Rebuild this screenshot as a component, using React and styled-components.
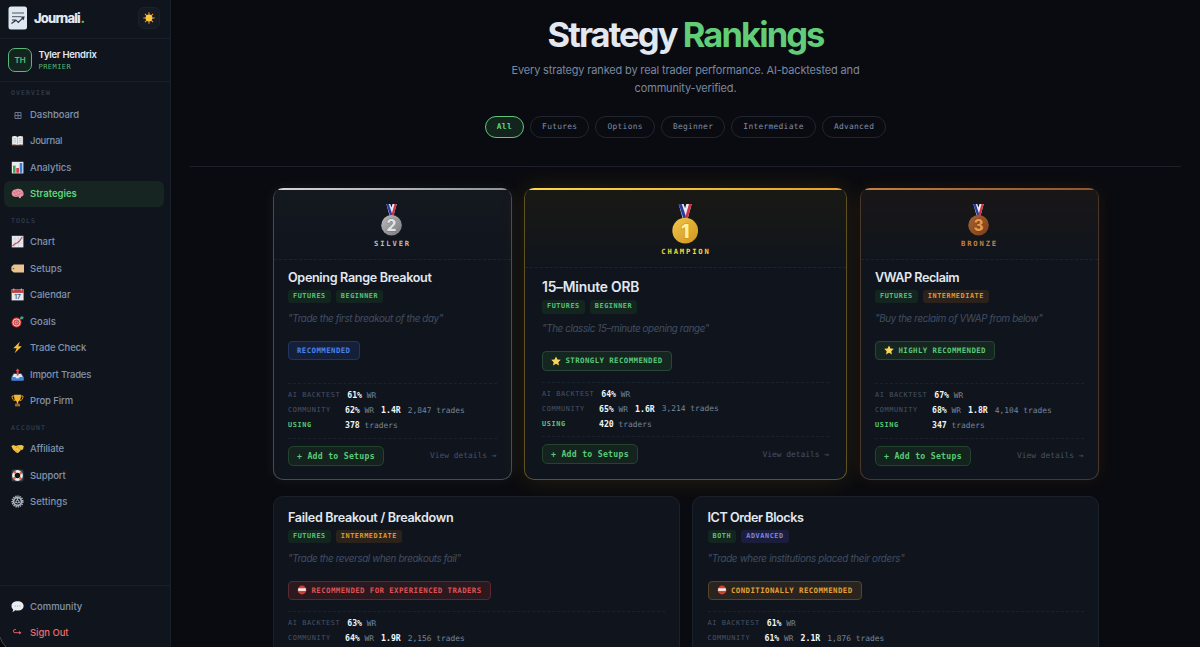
import styled, { createGlobalStyle, css } from "styled-components";

const sans = `"Inter", "Open Sans", sans-serif`;
const mono = `"DejaVu Sans Mono", "Liberation Mono", monospace`;

const GlobalStyle = createGlobalStyle`
    * {
        box-sizing: border-box;
        margin: 0;
        padding: 0;
    }
    body {
        background: #0a0b10;
        color: #e2e8f0;
        font-family: ${sans};
        overflow: hidden;
    }
    button {
        font: inherit;
        background: none;
        border: none;
        cursor: pointer;
    }
`
const Page = styled.div`
    display: flex;
    height: 647px;
    overflow: hidden;
    position: relative;
`

/* sidebar */

const Sidebar = styled.aside`
    width: 171px;
    flex-shrink: 0;
    background: #10151d;
    border-right: 1px solid #1a202b;
    display: flex;
    flex-direction: column;
`
const Brand = styled.div`
    height: 39px;
    padding: 0 10px 2px 8px;
    border-bottom: 1px solid #1a202b;
    display: flex;
    align-items: center;
`
const BrandName = styled.span`
    flex: 1;
    margin-left: 6px;
    font-size: 13px;
    font-weight: 800;
    letter-spacing: -0.85px;

    i {
        color: #4ecb71;
        font-style: normal;
        margin-left: 0.5px;
    }
`
const ThemeButton = styled.button`
    width: 22px;
    height: 22px;
    border-radius: 6px;
    border: 1px solid #1c222d;
    background: #151a23;
    display: flex;
    align-items: center;
    justify-content: center;
`
const User = styled.div`
    height: 43px;
    padding: 0 8px;
    border-bottom: 1px solid #1a202b;
    display: flex;
    align-items: center;
    gap: 6.5px;
`
const Avatar = styled.div`
    width: 24px;
    height: 24px;
    border: 1px solid #58b877;
    border-radius: 7px;
    background: #14241f;
    color: #5bc47b;
    font-size: 8px;
    font-weight: 600;
    display: flex;
    align-items: center;
    justify-content: center;
`
const UserName = styled.div`
    font-size: 9.5px;
    font-weight: 600;
    line-height: 12px;
    letter-spacing: -0.28px;
`
const Plan = styled.div`
    font-family: ${mono};
    font-size: 7px;
    line-height: 10px;
    margin-top: 1px;
    letter-spacing: 0.45px;
    color: #52b870;
`
const NavLabel = styled.div`
    height: 19px;
    margin-top: ${({ $first }) => ($first ? "0" : "2.5px")};
    padding: 2px 0 0 11px;
    font-family: ${mono};
    font-size: 6.5px;
    line-height: 18px;
    letter-spacing: 1.1px;
    color: #3b4557;
`
const NavItem = styled.a`
    height: 26px;
    margin: 0 6px 0.5px 4px;
    padding-left: 7px;
    border-radius: 6px;
    display: flex;
    align-items: center;
    gap: 6px;
    font-size: 9.5px;
    font-weight: 500;
    letter-spacing: ${({ $ls }) => $ls || 0}px;
    color: #8193ae;

    svg {
        width: 13px;
        height: 13px;
    }
    ${({ $active }) => $active && css`
        background: #162521;
        color: #5ed67c;
        font-weight: 600;
    `}
    ${({ $danger }) => $danger && css`
        color: #ef6a6a;
    `}
`
const SidebarFooter = styled.div`
    margin-top: auto;
    height: 62px;
    padding-top: 7px;
    border-top: 1px solid #1a202b;
`
const WindowCorner = styled.svg`
    position: absolute;
    left: 0;
    bottom: 0;
    width: 6px;
    height: 11px;
`

/* heading */

const Main = styled.main`
    flex: 1;
    display: flex;
    flex-direction: column;
    align-items: center;
`
const Heading = styled.header`
    width: 991px;
    height: 167px;
    flex-shrink: 0;
    padding-top: 13px;
    border-bottom: 1px solid #1b202a;
    display: flex;
    flex-direction: column;
    align-items: center;
`
const Title = styled.h1`
    font-size: 34.5px;
    line-height: 44px;
    font-weight: 700;
    letter-spacing: -1.9px;

    span {
        color: #62cd78;
    }
`
const Subtitle = styled.p`
    margin-top: 5px;
    width: 370px;
    text-align: center;
    font-size: 11px;
    line-height: 17.5px;
    letter-spacing: -0.16px;
    color: #7988a0;
`
const Filters = styled.div`
    margin-top: 18.5px;
    display: flex;
    gap: 6px;
`
const Pill = styled.button`
    height: 22px;
    padding: 0 11.1px;
    border: 1px solid ${({ $active }) => ($active ? "#5dc67b" : "#20252f")};
    border-radius: 11px;
    background: ${({ $active }) => ($active ? "#13241c" : "transparent")};
    color: ${({ $active }) => ($active ? "#62d67e" : "#7f8ea9")};
    font-family: ${mono};
    font-size: 7.9px;
    font-weight: ${({ $active }) => ($active ? 700 : 400)};
    letter-spacing: 0.28px;
`

/* cards */

const Grid = styled.section`
    width: 826px;
    flex-shrink: 0;
    display: grid;
    grid-template-columns: ${({ $columns }) => $columns};
    gap: 12.5px;
    margin-top: ${({ $top }) => $top}px;
`
const tiers = {
    silver: {
        border: "#474b52",
        bar: "linear-gradient(90deg, #d5d6d8, #b4b6ba 50%, #8d9095)",
        tint: "#14181f",
        label: "#b9bdc4",
        glow: "0 0 14px rgba(190, 195, 205, 0.07)",
    },
    gold: {
        border: "#5f5220",
        bar: "linear-gradient(90deg, #ffd84a, #f2c23c 50%, #e79e2f)",
        tint: "#191914",
        label: "#f4d83c",
        glow: "0 0 26px rgba(220, 165, 20, 0.14)",
    },
    bronze: {
        border: "#4b372a",
        bar: "linear-gradient(90deg, #c98142, #a9683a 50%, #8d5530)",
        tint: "#191616",
        label: "#c5803f",
        glow: "0 0 16px rgba(190, 110, 40, 0.1)",
    },
}
const CardBox = styled.article`
    min-height: 291.5px;
    border: 1px solid ${({ $tier }) => ($tier ? tiers[$tier].border : "#1a212d")};
    border-top-width: ${({ $tier }) => ($tier ? 0 : 1)}px;
    border-radius: 10px;
    overflow: hidden;
    background: #10151d;
    box-shadow: ${({ $tier }) => ($tier ? tiers[$tier].glow : "none")};
    display: flex;
    flex-direction: column;
`
const TopBar = styled.div`
    height: 2px;
    flex-shrink: 0;
    background: ${({ $tier }) => tiers[$tier].bar};
`
const CardHead = styled.div`
    height: ${({ $tier }) => ($tier === "gold" ? 78 : 69.5)}px;
    padding-top: 14px;
    border-bottom: 1px dashed #1c232d;
    background: linear-gradient(180deg, ${({ $tier }) => tiers[$tier].tint}, #10151d);
    display: flex;
    flex-direction: column;
    align-items: center;
`
const RankLabel = styled.div`
    margin-top: 2px;
    font-family: ${mono};
    font-size: 7.2px;
    line-height: 12px;
    font-weight: 700;
    letter-spacing: 1.85px;
    padding-left: 1px;
    color: ${({ $tier }) => tiers[$tier].label};
`
const CardBody = styled.div`
    flex: 1;
    padding: ${({ $pad }) => $pad};
    display: flex;
    flex-direction: column;
`
const Name = styled.h2`
    font-size: ${({ $large }) => ($large ? 13.8 : 12.6)}px;
    line-height: ${({ $large }) => ($large ? 18 : 17)}px;
    font-weight: 600;
    letter-spacing: ${({ $ls }) => $ls}px;
`
const Tags = styled.div`
    margin-top: 4px;
    display: flex;
    gap: 5px;
`
const tagColors = {
    green: ["#12261f", "#58c278"],
    orange: ["#2a221b", "#e0992f"],
    violet: ["#1b1e3a", "#7f83ea"],
}
const Tag = styled.span`
    height: 13.5px;
    padding: 0 5px;
    border-radius: 3px;
    background: ${({ $color }) => tagColors[$color][0]};
    color: ${({ $color }) => tagColors[$color][1]};
    font-family: ${mono};
    font-size: 6.8px;
    line-height: 13.5px;
    font-weight: 700;
    letter-spacing: 0.59px;
`
const Quote = styled.p`
    margin-top: 6.5px;
    font-size: 9.8px;
    line-height: 17px;
    font-style: italic;
    letter-spacing: ${({ $ls }) => $ls}px;
    color: #414d62;
`
const adviceColors = {
    green: ["#15251f", "#264735", "#5ac77a"],
    blue: ["#14203a", "#203661", "#4c82e6"],
    red: ["#2b191f", "#5a2830", "#de5355"],
    orange: ["#2a241e", "#57432a", "#e3a13a"],
}
const Advice = styled.div`
    align-self: flex-start;
    margin-top: 14px;
    height: 19.5px;
    padding: 0 8.5px 0 8px;
    border: 1px solid ${({ $color }) => adviceColors[$color][1]};
    border-radius: 4px;
    background: ${({ $color }) => adviceColors[$color][0]};
    color: ${({ $color }) => adviceColors[$color][2]};
    display: flex;
    align-items: center;
    gap: 4.5px;
    font-family: ${mono};
    font-size: 7.4px;
    font-weight: 700;
    letter-spacing: 0.41px;

    svg {
        width: 10px;
        height: 10px;
    }
`
const Stats = styled.dl`
    margin-top: ${({ $gap }) => ($gap ? $gap + "px" : "auto")};
    padding: 3.5px 0 5px;
    border-top: 1px dashed #1b222d;
    border-bottom: 1px dashed #1b222d;
`
const Stat = styled.div`
    height: 15px;
    display: flex;
    align-items: center;
    gap: 7px;
    font-family: ${mono};
    font-size: 7.9px;
    color: #76859c;
`
const StatLabel = styled.dt`
    min-width: 50px;
    font-size: 6.9px;
    letter-spacing: 0.6px;
    font-weight: ${({ $green }) => ($green ? 700 : 400)};
    color: ${({ $green }) => ($green ? "#58c878" : "#475266")};
`
const StatValue = styled.dd`
    b {
        font-size: 8.2px;
        color: #f1f5f9;
    }
`
const CardFooter = styled.div`
    padding-top: 7px;
    display: flex;
    align-items: center;
    justify-content: space-between;
`
const AddButton = styled.button`
    height: 20px;
    padding: 0 8.5px 0 8px;
    border: 1px solid #23432f;
    border-radius: 5px;
    background: #15231f;
    color: #58cb77;
    font-family: ${mono};
    font-size: 8.2px;
    font-weight: 700;
    letter-spacing: 0.26px;
`
const Details = styled.a`
    font-family: ${mono};
    font-size: 7.9px;
    color: #465165;
`

/* drawings */

const drawings = {
    dashboard: (
        <g fill="none" stroke="#66758d" strokeWidth="1">
            <path d="M4 4.5h6v6H4zM7 4.5v6M4 7.5h6" />
        </g>
    ),
    journal: (
        <>
            <path d="M.8 2.8h11.4v8.6H.8z" fill="#8b6a55" />
            <path d="M1.2 2.6Q4 1.4 6.5 3 9 1.4 11.8 2.6v8Q9 9.6 6.5 11 4 9.6 1.2 10.600z" fill="#eceff3" />
            <path d="M6.5 3v8M2.500 4.500l2.700.2M2.500 6.200l2.700.2M2.500 8l2.700.2M7.800 4.700l2.700-.2M7.800 6.400l2.700-.2M7.800 8.200l2.700-.2" stroke="#9da5af" strokeWidth=".6" />
        </>
    ),
    analytics: (
        <>
            <path d="M.8.8h11.600v11.600H.8z" fill="#e9edf0" />
            <path d="M2 4.600h2.600v7.200H2z" fill="#3aa655" />
            <path d="M5.300 7h2.600v4.800H5.300z" fill="#d93a3a" />
            <path d="M8.700 2h2.600v9.800H8.700z" fill="#3b7bdc" />
        </>
    ),
    strategies: (
        <>
            <path d="M1 8C0 5 2 2.500 5 2.300 8 1 12 2.600 12.600 6c.3 2-.6 3.300-2.300 3.500L9.500 11.300 8 11 7.500 9.600C5 10.200 1.800 10 1 8z" fill="#e793a5" />
            <path d="M2.300 5.600c1.500-.6 2 .5 1.600 1.600M4.500 3.500c1.600 0 1.800 1.600.8 2.300M7.500 3c-.3 1.300.6 2 1.900 1.500M6.300 7.300c1.200.8 2.800.2 3-1.200M10.800 5.300l.7 1.700M4 8.700c1 .2 1.800-.1 2.300-.7" fill="none" stroke="#b65b72" strokeWidth=".6" />
        </>
    ),
    chart: (
        <>
            <path d="M.8.8h11.600v11.600H.8z" fill="#e5e8ee" />
            <path d="M4 1v11M7.500 1v11M1 4h11M1 8h11" stroke="#bcc5d2" strokeWidth=".4" />
            <path d="M1.500 11l3-2.500 1.600-.6L8.500 6l2.800-4.300" fill="none" stroke="#d0454f" strokeWidth="1.100" />
        </>
    ),
    setups: (
        <>
            <path d="M2.800 2.500H13v8H2.800L.4 8.500V4.800z" fill="#eac490" />
            <circle cx="2.500" cy="6.600" r=".8" fill="#7b5b38" />
        </>
    ),
    calendar: (
        <>
            <path d="M.6 1.200h12v11.200H.6z" fill="#e8e9eb" />
            <path d="M.6 1.200h12v3.700H.6z" fill="#b54145" />
            <path d="M2.800.5v2.200M10.300.5v2.200" stroke="#d8dadd" strokeWidth=".8" />
            <text x="6.600" y="11" fontSize="6.600" fontWeight="600" textAnchor="middle" fill="#4e5764">17</text>
        </>
    ),
    goals: (
        <>
            <circle cx="5.500" cy="7.500" r="4.900" fill="#d9403d" />
            <circle cx="5.500" cy="7.500" r="3.500" fill="none" stroke="#f1e6e6" strokeWidth=".8" />
            <circle cx="5.500" cy="7.500" r="1.500" fill="none" stroke="#f1e6e6" strokeWidth=".6" />
            <path d="M5.500 7.500l5-4.800" stroke="#8b979d" strokeWidth=".9" />
            <path d="M9.300 4.200V2.200L11.500.8v1.500h1.500l-1.500 2z" fill="#4aa58b" />
        </>
    ),
    tradeCheck: <path d="M8.800.8L2.300 7.200h3.400L3.600 12.300l7.200-7H7.300z" fill="#f8bd3a" />,
    importTrades: (
        <>
            <path d="M2.500 5.500h8l2 3.500v3.500H.6V9z" fill="#4c88d2" />
            <path d="M3 6h7l1.600 3H8.800l-.8 1.500H5L4.200 9H1.500z" fill="#dfe9f4" />
            <path d="M.6 9h3.600L5 10.500h3L8.800 9h3.800v3.500H.6z" fill="#4384d6" />
            <path d="M5.700 7.500V3H4.600L6.600.4 8.700 3H7.600v4.500z" fill="#d94c48" />
        </>
    ),
    propFirm: (
        <>
            <path d="M3 2H1c0 3 1.200 4.300 3 4.500M10 2h2c0 3-1.200 4.300-3 4.500" fill="none" stroke="#d9982c" strokeWidth="1" />
            <path d="M3 .8h7c0 4-.7 6.200-2.800 6.900v2h-1.400v-2C3.700 7 3 4.800 3 .8z" fill="#f0b534" />
            <path d="M4 9.700h5v2.700H4z" fill="#9c682e" />
        </>
    ),
    affiliate: (
        <>
            <path d="M.3 4l2.200-1L5 4l2-.7L10.600 3l2.200 1-.8 3.400-2 .5-3 3.200-1.800-.6L2 7.500z" fill="#f2c340" />
            <path d="M4.600 6.200L6.500 4.700 10 8M5 9.500L3.800 8.300M6.700 9.800L5.300 8.300" fill="none" stroke="#b97f23" strokeWidth=".6" />
        </>
    ),
    support: (
        <>
            <rect x=".5" y=".5" width="12" height="12" rx="2" fill="#333c49" />
            <circle cx="6.500" cy="6.500" r="3.200" fill="#10151d" />
            <circle cx="6.500" cy="6.500" r="4.100" fill="none" stroke="#f1eeec" strokeWidth="2.600" />
            <circle cx="6.500" cy="6.500" r="4.100" fill="none" stroke="#e0653a" strokeWidth="2.600" strokeDasharray="2.200 4.240" strokeDashoffset="-2.100" />
        </>
    ),
    settings: (
        <>
            <circle cx="6.500" cy="6.500" r="5.300" fill="none" stroke="#a8b0ba" strokeWidth="1.600" strokeDasharray="1.400 .8" />
            <circle cx="6.500" cy="6.500" r="3.900" fill="none" stroke="#a8b0ba" strokeWidth="1.700" />
            <path d="M6.500 3v2.500M3.500 8.300l2.200-1.300M9.500 8.300L7.300 7" stroke="#9aa3ae" strokeWidth="1" />
            <circle cx="6.500" cy="6.500" r="1.500" fill="none" stroke="#bac1ca" strokeWidth="1" />
        </>
    ),
    community: (
        <>
            <path d="M6.600 1.200c3.600 0 6 2 6 4.700s-2.400 4.700-6 4.700c-.9 0-1.700-.1-2.400-.3-.8.900-1.700 1.500-2.900 1.600.6-.7.900-1.500.9-2.500C1.100 8.500.5 7.400.5 5.900c0-2.700 2.400-4.700 6.100-4.700z" fill="#e9ecf0" />
            <path d="M3.800 6h1M6.100 6h1M8.400 6h1" stroke="#8d95a1" strokeWidth=".9" />
        </>
    ),
    signOut: (
        <>
            <path d="M4.800 3.500H4a1.600 1.600 0 0 0 0 3.200h5.500" fill="none" stroke="#e05e60" strokeWidth="1" />
            <path d="M8 4.900l2.500 1.800L8 8.500z" fill="#e05e60" />
        </>
    ),
    sun: (
        <>
            <path d="M6.500.3v12.400M.3 6.500h12.400M2.100 2.100l8.800 8.800M10.900 2.100l-8.800 8.800" stroke="#ee9a30" strokeWidth="1.100" />
            <circle cx="6.500" cy="6.500" r="3.700" fill="#f9c543" />
        </>
    ),
    star: <path d="M6.500.5l1.900 4 4.300.5-3.200 3 .9 4.400-3.900-2.200-3.900 2.200.9-4.400L.3 5l4.300-.5z" fill="#fbd45a" />,
    noEntry: (
        <>
            <circle cx="6.500" cy="6.500" r="5.700" fill="#cf4034" />
            <path d="M1.500 4.300h10v3.400h-10z" fill="#f6e9e6" />
        </>
    ),
}

function Icon({ name, size = 13 }) {
    return <svg width={size} height={size} viewBox="0 0 13 13">{drawings[name]}</svg>
}

function Logo() {
    return (
        <svg width="20" height="24" viewBox="0 0 20 24">
            <rect x=".5" y=".5" width="18.500" height="23" rx="2.500" fill="#dfe7f1" />
            <path d="M4 7h12M4 10.700h9" stroke="#4c5662" strokeWidth="1" />
            <path d="M3.500 17.500l4.500-3.300 2.300 2.300 5.200-5.300M4 14h3.500M13 11h3l-1 3" fill="none" stroke="#28313d" strokeWidth="1.100" />
        </svg>
    )
}

const medals = {
    silver: { rank: 2, light: "#bdbdbf", dark: "#77787b", digit: "#e2e3e4" },
    gold: { rank: 1, light: "#f3c64a", dark: "#cf9420", digit: "#fff0a6" },
    bronze: { rank: 3, light: "#a9622f", dark: "#7c3d19", digit: "#e59a50" },
}

function Medal({ tier }) {
    const { rank, light, dark, digit } = medals[tier]
    const height = tier === "gold" ? 40 : 32
    return (
        <svg width={height * 0.66} height={height} viewBox="0 0 21 32">
            <defs>
                <linearGradient id={`medal-${tier}`} x1="0" y1="0" x2="1" y2="1">
                    <stop offset="0" stopColor={light} />
                    <stop offset="1" stopColor={dark} />
                </linearGradient>
            </defs>
            <path d="M5.300 0h10.400l-3.200 11.500h-4z" fill="#e9ebf2" />
            <path d="M5.300 0h2.500l3.800 11.500H9z" fill="#2c3a9e" />
            <path d="M15.700 0h-2.200l-3.300 11.500h2.300z" fill="#cc3346" />
            <path d="M9.200 0h2.200l-1 3.400z" fill="#14181f" />
            <circle cx="10.500" cy="21.300" r="10.300" fill={`url(#medal-${tier})`} />
            <text x="10.500" y="27" textAnchor="middle" fontSize="15.500" fontWeight="800" fill={digit} stroke={dark} strokeWidth="1" paintOrder="stroke">{rank}</text>
        </svg>
    )
}

/* content */

const sections = [
    {
        label: "OVERVIEW",
        items: [
            ["dashboard", "Dashboard", -0.05],
            ["journal", "Journal", -0.3],
            ["analytics", "Analytics", -0.1],
            ["strategies", "Strategies", 0],
        ],
    },
    {
        label: "TOOLS",
        items: [
            ["chart", "Chart", -0.05],
            ["setups", "Setups", 0.05],
            ["calendar", "Calendar", -0.05],
            ["goals", "Goals", 0],
            ["tradeCheck", "Trade Check", -0.15],
            ["importTrades", "Import Trades", -0.18],
            ["propFirm", "Prop Firm", -0.1],
        ],
    },
    {
        label: "ACCOUNT",
        items: [
            ["affiliate", "Affiliate", -0.1],
            ["support", "Support", -0.1],
            ["settings", "Settings", 0.05],
        ],
    },
]

const filters = ["All", "Futures", "Options", "Beginner", "Intermediate", "Advanced"]

const podium = [
    {
        tier: "silver", rank: "SILVER", name: "Opening Range Breakout", nameSpacing: -0.33,
        tags: [["FUTURES", "green"], ["BEGINNER", "green"]],
        quote: "Trade the first breakout of the day", quoteSpacing: -0.36,
        advice: "RECOMMENDED", adviceColor: "blue",
        backtest: "61%", community: "62%", ratio: "1.4R", trades: "2,847", using: 378,
    },
    {
        tier: "gold", rank: "CHAMPION", name: "15–Minute ORB", nameSpacing: -0.2,
        tags: [["FUTURES", "green"], ["BEGINNER", "green"]],
        quote: "The classic 15–minute opening range", quoteSpacing: -0.37,
        advice: "STRONGLY RECOMMENDED", adviceColor: "green", adviceIcon: "star",
        backtest: "64%", community: "65%", ratio: "1.6R", trades: "3,214", using: 420,
    },
    {
        tier: "bronze", rank: "BRONZE", name: "VWAP Reclaim", nameSpacing: -0.45,
        tags: [["FUTURES", "green"], ["INTERMEDIATE", "orange"]],
        quote: "Buy the reclaim of VWAP from below", quoteSpacing: -0.35,
        advice: "HIGHLY RECOMMENDED", adviceColor: "green", adviceIcon: "star",
        backtest: "67%", community: "68%", ratio: "1.8R", trades: "4,104", using: 347,
    },
]

const others = [
    {
        name: "Failed Breakout / Breakdown", nameSpacing: -0.3,
        tags: [["FUTURES", "green"], ["INTERMEDIATE", "orange"]],
        quote: "Trade the reversal when breakouts fail", quoteSpacing: -0.37,
        advice: "RECOMMENDED FOR EXPERIENCED TRADERS", adviceColor: "red", adviceIcon: "noEntry",
        backtest: "63%", community: "64%", ratio: "1.9R", trades: "2,156",
    },
    {
        name: "ICT Order Blocks", nameSpacing: -0.43,
        tags: [["BOTH", "green"], ["ADVANCED", "violet"]],
        quote: "Trade where institutions placed their orders", quoteSpacing: -0.31,
        advice: "CONDITIONALLY RECOMMENDED", adviceColor: "orange", adviceIcon: "noEntry",
        backtest: "61%", community: "61%", ratio: "2.1R", trades: "1,876",
    },
]

function bodyPadding(tier) {
    if (tier === "gold") return "10px 17px 14.5px"
    return tier ? "9px 14px 13px 14.5px" : "12px 14px 13px 14.5px"
}

function Card({ item }) {
    const { tier } = item
    return (
        <CardBox $tier={tier}>
            {tier && <TopBar $tier={tier} />}
            {tier && (
                <CardHead $tier={tier}>
                    <Medal tier={tier} />
                    <RankLabel $tier={tier}>{item.rank}</RankLabel>
                </CardHead>
            )}
            <CardBody $pad={bodyPadding(tier)}>
                <Name $large={tier === "gold"} $ls={item.nameSpacing}>{item.name}</Name>
                <Tags>
                    {item.tags.map(([text, color]) => <Tag key={text} $color={color}>{text}</Tag>)}
                </Tags>
                <Quote $ls={item.quoteSpacing}>"{item.quote}"</Quote>
                <Advice $color={item.adviceColor}>
                    {item.adviceIcon && <Icon name={item.adviceIcon} />}
                    {item.advice}
                </Advice>
                <Stats $gap={tier ? null : 11}>
                    <Stat>
                        <StatLabel>AI BACKTEST</StatLabel>
                        <StatValue><b>{item.backtest}</b> WR</StatValue>
                    </Stat>
                    <Stat>
                        <StatLabel>COMMUNITY</StatLabel>
                        <StatValue><b>{item.community}</b> WR</StatValue>
                        <StatValue><b>{item.ratio}</b></StatValue>
                        <StatValue>{item.trades} trades</StatValue>
                    </Stat>
                    {item.using && (
                        <Stat>
                            <StatLabel $green>USING</StatLabel>
                            <StatValue><b>{item.using}</b> traders</StatValue>
                        </Stat>
                    )}
                </Stats>
                {item.using && (
                    <CardFooter>
                        <AddButton>+ Add to Setups</AddButton>
                        <Details>View details →</Details>
                    </CardFooter>
                )}
            </CardBody>
        </CardBox>
    )
}

function App() {
    return (
        <Page>
            <GlobalStyle />
            <Sidebar>
                <Brand>
                    <Logo />
                    <BrandName>Journali<i>.</i></BrandName>
                    <ThemeButton><Icon name="sun" size={12} /></ThemeButton>
                </Brand>
                <User>
                    <Avatar>TH</Avatar>
                    <div>
                        <UserName>Tyler Hendrix</UserName>
                        <Plan>PREMIER</Plan>
                    </div>
                </User>
                {sections.map(({ label, items }, i) => (
                    <nav key={label}>
                        <NavLabel $first={i === 0}>{label}</NavLabel>
                        {items.map(([icon, text, spacing]) => (
                            <NavItem key={text} $active={text === "Strategies"} $ls={spacing}>
                                <Icon name={icon} />
                                {text}
                            </NavItem>
                        ))}
                    </nav>
                ))}
                <SidebarFooter>
                    <NavItem><Icon name="community" />Community</NavItem>
                    <NavItem $danger $ls={-0.05}><Icon name="signOut" />Sign Out</NavItem>
                </SidebarFooter>
            </Sidebar>
            <Main>
                <Heading>
                    <Title>Strategy <span>Rankings</span></Title>
                    <Subtitle>Every strategy ranked by real trader performance. AI-backtested and community-verified.</Subtitle>
                    <Filters>
                        {filters.map((text) => <Pill key={text} $active={text === "All"}>{text}</Pill>)}
                    </Filters>
                </Heading>
                <Grid $columns="239px 1fr 239px" $top={21}>
                    {podium.map((item) => <Card key={item.name} item={item} />)}
                </Grid>
                <Grid $columns="407px 1fr" $top={16}>
                    {others.map((item) => <Card key={item.name} item={item} />)}
                </Grid>
            </Main>
            <WindowCorner viewBox="0 0 6 11">
                <path d="M0 1Q1.500 7 6 11H0z" fill="#050608" />
                <path d="M0 1Q1.500 7 6 11" fill="none" stroke="#5c5558" strokeWidth=".8" />
            </WindowCorner>
        </Page>
    )
}

export default App
